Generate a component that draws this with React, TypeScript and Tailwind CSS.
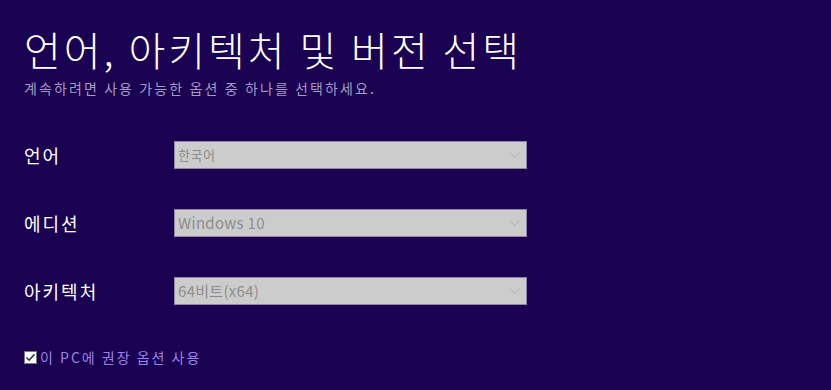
import React from 'react';

const rows = [
  { label: '언어', value: '한국어', small: true },
  { label: '에디션', value: 'Windows 10' },
  { label: '아키텍처', value: '64비트(x64)' },
];

const font = { fontFamily: '"Noto Sans CJK KR", "Noto Sans", sans-serif' };

function Select({ value, small }: { value: string; small?: boolean }) {
  return (
    <div className="flex h-[28px] w-[353px] items-center justify-between border border-[#8e86a8] bg-[#cccccc] pl-[3px] pr-[5px]">
      <span className={`${small ? 'text-[13px] tracking-[0.5px]' : 'text-[15px] tracking-[0.3px]'} text-[#8d8d8d]`}>{value}</span>
      <svg width="12" height="8" viewBox="0 0 12 8" fill="none" stroke="#adadad" strokeWidth="1">
        <path d="M1 1.5 6 6.5 11 1.5" />
      </svg>
    </div>
  );
}

export default function App() {
  return (
    <div className="h-[390px] w-[831px] bg-[#1b0152] pl-[24px] pt-[20px] text-white" style={font}>
      <h1 className="text-[40px] font-light leading-[58px] tracking-[3px] text-white">언어, 아키텍처 및 버전 선택</h1>
      <p className="text-[14px] leading-[20px] tracking-[2.1px] text-[#a49cc4]">
        계속하려면 사용 가능한 옵션 중 하나를 선택하세요.
      </p>

      <div className="mt-[43px] flex flex-col gap-[40px]">
        {rows.map((r) => (
          <div key={r.label} className="flex items-center">
            <div className="w-[150px] text-[18px] leading-[26px] tracking-[2px]">{r.label}</div>
            <Select value={r.value} small={r.small} />
          </div>
        ))}
      </div>

      <label className="mt-[42px] flex items-center gap-[3px]">
        <span className="flex h-[13px] w-[13px] items-center justify-center border border-[#7a7a7a] bg-white">
          <svg width="11" height="11" viewBox="0 0 11 11" fill="none" stroke="#333" strokeWidth="1.6">
            <path d="M1.5 5.5 4.2 8.2 9.5 2.2" />
          </svg>
        </span>
        <span className="text-[14px] leading-[20px] tracking-[2px] text-[#9b82e8]">이 PC에 권장 옵션 사용</span>
      </label>
    </div>
  );
}
